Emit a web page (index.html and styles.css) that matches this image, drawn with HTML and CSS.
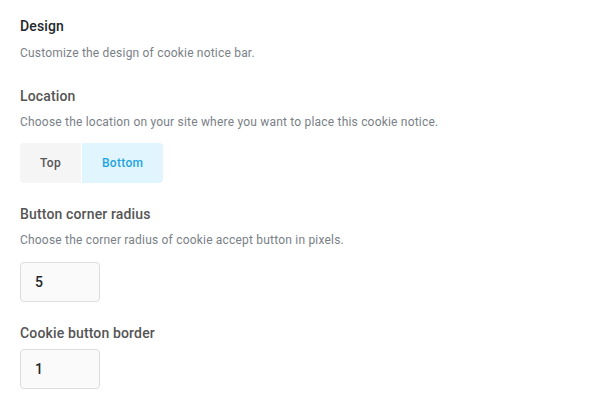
FILE: index.html
```html
<!DOCTYPE html>
<html lang="en">
<head>
    <meta charset="UTF-8">
    <title>Cookie Notice - Design</title>
    <link rel="stylesheet" href="styles.css">
</head>
<body>
    <div class="settings">
        <div class="section">
            <h3 class="section-title">Design</h3>
            <p class="desc">Customize the design of cookie notice bar.</p>
        </div>

        <div class="field">
            <h4 class="field-title">Location</h4>
            <p class="desc">Choose the location on your site where you want to place this cookie notice.</p>
            <div class="segmented">
                <button type="button" class="seg">Top</button>
                <button type="button" class="seg active">Bottom</button>
            </div>
        </div>

        <div class="field">
            <h4 class="field-title">Button corner radius</h4>
            <p class="desc">Choose the corner radius of cookie accept button in pixels.</p>
            <input type="number" class="num" value="5">
        </div>

        <div class="field">
            <h4 class="field-title tight">Cookie button border</h4>
            <input type="number" class="num" value="1">
        </div>
    </div>
</body>
</html>
```

FILE: styles.css
```css
body {
    margin: 0;
    font-family: Roboto, "Liberation Sans", Arial, sans-serif;
    background-color: #fff;
    color: #555;
}
.settings {
    padding: 17px 20px 0;
}
h3, h4, p {
    margin: 0;
}
.section-title {
    font-size: 14px;
    font-weight: 500;
    line-height: 18px;
    letter-spacing: 0.15px;
    color: #23282d;
}
.field-title {
    font-size: 14px;
    font-weight: 500;
    line-height: 18px;
    letter-spacing: 0.15px;
    color: #555;
}
.desc {
    font-size: 12px;
    line-height: 16px;
    letter-spacing: 0.2px;
    color: #7a7f87;
    margin-top: 9px;
}
.section .desc {
    margin-top: 10px;
}
.section {
    margin-bottom: 26px;
}
.field {
    margin-bottom: 22px;
}
.segmented {
    display: flex;
    margin-top: 13px;
}
.seg {
    height: 40px;
    padding: 0 20px;
    border: none;
    font-family: inherit;
    font-size: 12px;
    font-weight: 500;
    letter-spacing: 0.3px;
    background-color: #f5f5f5;
    color: #555;
    cursor: pointer;
}
.seg:first-child {
    border-radius: 4px 0 0 4px;
    margin-right: 1px;
}
.seg:last-child {
    border-radius: 0 4px 4px 0;
}
.seg.active {
    background-color: #e1f5fe;
    color: #1ea5e0;
}
.num {
    display: block;
    box-sizing: border-box;
    width: 80px;
    height: 40px;
    margin-top: 14px;
    padding: 0 14px;
    border: 1px solid #ddd;
    border-radius: 4px;
    background-color: #fafafa;
    font-family: inherit;
    font-size: 14px;
    font-weight: 500;
    color: #23282d;
    -moz-appearance: textfield;
}
.num::-webkit-inner-spin-button,
.num::-webkit-outer-spin-button {
    -webkit-appearance: none;
    margin: 0;
}
.tight + .num {
    margin-top: 7px;
}
```
